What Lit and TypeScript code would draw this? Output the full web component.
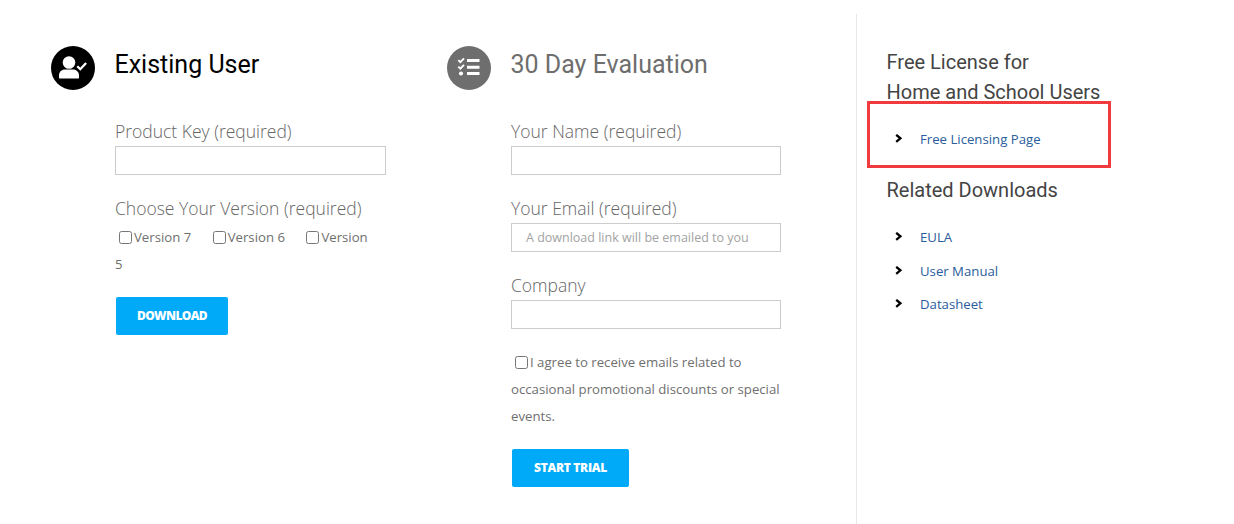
import { LitElement, html, css, svg } from "lit";
import { customElement } from "lit/decorators.js";

const userIcon = html`<svg viewBox="0 0 44 44" width="44" height="44"><circle cx="22" cy="22" r="22" fill="#000"/>
<circle cx="18" cy="16.5" r="6.3" fill="#fff"/>
<path d="M8 31.500v-2.400c0-3.300 2.700-5.700 5.900-5.700h8.200c3.200 0 5.900 2.500 5.900 5.700v2.400c0 .6-.5 1-1 1H9c-.5 0-1-.4-1-1z" fill="#fff"/>
<path d="M26.300 20.200l3 3 5.800-6.200" fill="none" stroke="#fff" stroke-width="2.300"/></svg>`;

const listIcon = html`<svg viewBox="0 0 44 44" width="44" height="44"><circle cx="22" cy="22" r="22" fill="#6e6e6e"/>
<path d="M11.300 14.200l2 2 3.700-3.900M11.300 20.700l2 2 3.700-3.900" fill="none" stroke="#fff" stroke-width="1.900"/>
<circle cx="14" cy="27.500" r="2.100" fill="#fff"/>
<path d="M20 13h12.500v3H20zM20 19.700h12.500v3H20zM20 26h12.500v3H20z" fill="#fff"/></svg>`;

const chevron = svg`<path d="M1.200 .8l4.200 3.500-4.200 3.500" fill="none" stroke="#000" stroke-width="2.300"/>`;

@customElement("app-root")
export class AppRoot extends LitElement {
  static styles = css`
    :host { display: block; width: 1234px; height: 524px; background: #fff; overflow: hidden; position: relative; font-family: "Open Sans", sans-serif; color: #6f6f6f; }
    .page { display: grid; grid-template-columns: 396px 409px 1fr; padding: 14px 0 0 51px; height: 510px; }
    .col { display: grid; grid-template-columns: 64px 1fr; align-content: start; padding-top: 32px; }
    .icon { width: 44px; height: 44px; display: block; }
    .icon svg { display: block; }
    .body { min-width: 0; }
    .title { font: 400 25px/38px Roboto, sans-serif; margin: 0 0 0 -0.500px; height: 36px; color: #000; }
    .title.grey { color: #6e6e6e; }
    .fields { width: 271px; padding-top: 36px; }
    .grey-col .fields { width: 270px; }
    .label { font: 300 17.500px/26px "Open Sans", sans-serif; color: #666; display: block; height: 28px; }
    .input { box-sizing: border-box; height: 29px; width: 100%; border: 1px solid #ccc; background: #fff; margin: 0 0 20px; display: block; padding: 0 14px; font: 400 12.500px/27px "Open Sans", sans-serif; color: #a3a3a3; }
    .checks { font: 400 13.200px/27px "Open Sans", sans-serif; color: #6f6f6f; margin: 0; }
    .versions { margin-top: 1px; }
    .box { display: inline-block; box-sizing: border-box; width: 13px; height: 13px; border: 1px solid #767676; border-radius: 2.500px; vertical-align: -2px; background: #fff; margin: 0 2px 0 4px; }
    .item { margin-right: 14px; }
    .btn { display: flex; align-items: center; justify-content: center; background: #00aaf9; color: #fff; font: 800 12px/38px "Open Sans", sans-serif; letter-spacing: -0.300px; border-radius: 2px; height: 38px; margin: 0 0 0 1px; }
    .dl { width: 112px; margin-top: 19px; letter-spacing: -0.600px; }
    .st { width: 117px; margin-top: 19px; }
    .agree { margin-top: 4px; }
    .side { border-left: 1px solid #e8e8e8; padding: 33px 0 0 30px; }
    .side h3 { font: 400 20px/30px Roboto, sans-serif; color: #444; margin: 0 0 0 -0.500px; }
    .links { list-style: none; margin: 0; padding: 0; }
    .links li { display: flex; align-items: center; height: 33.500px; font: 400 13.200px/20px "Open Sans", sans-serif; color: #2a5d9c; }
    .links svg { width: 8px; height: 9px; margin: -1px 0 0 8px; flex: none; }
    .links span { margin-left: 17px; }
    .first { margin-top: 15px; margin-bottom: 19px; }
    .second { margin-top: 16px; }
    .mark { position: absolute; left: 867px; top: 101px; width: 244px; height: 67px; box-sizing: border-box; border: 3px solid #f03a3e; }
  `;

  render() {
    const link = (t: string) => html`<li><svg viewBox="0 0 8 9">${chevron}</svg><span>${t}</span></li>`;
    return html`
      <div class="page">
        <section class="col">
          <div class="icon">${userIcon}</div>
          <div class="body">
            <h2 class="title">Existing User</h2>
            <div class="fields">
              <span class="label">Product Key (required)</span>
              <div class="input"></div>
              <span class="label">Choose Your Version (required)</span>
              <p class="checks versions"><span class="box"></span>Version 7 <span class="item"></span><span class="box"></span>Version 6 <span class="item"></span><span class="box"></span>Version<br />5</p>
              <div class="btn dl">DOWNLOAD</div>
            </div>
          </div>
        </section>
        <section class="col grey-col">
          <div class="icon">${listIcon}</div>
          <div class="body">
            <h2 class="title grey">30 Day Evaluation</h2>
            <div class="fields">
              <span class="label">Your Name (required)</span>
              <div class="input"></div>
              <span class="label">Your Email (required)</span>
              <div class="input">A download link will be emailed to you</div>
              <span class="label">Company</span>
              <div class="input"></div>
              <p class="checks agree"><span class="box"></span>I agree to receive emails related to occasional promotional discounts or special events.</p>
              <div class="btn st">START TRIAL</div>
            </div>
          </div>
        </section>
        <aside class="side">
          <h3>Free License for<br />Home and School Users</h3>
          <ul class="links first">${link("Free Licensing Page")}</ul>
          <h3>Related Downloads</h3>
          <ul class="links second">${link("EULA")}${link("User Manual")}${link("Datasheet")}</ul>
        </aside>
      </div>
      <div class="mark"></div>
    `;
  }
}
